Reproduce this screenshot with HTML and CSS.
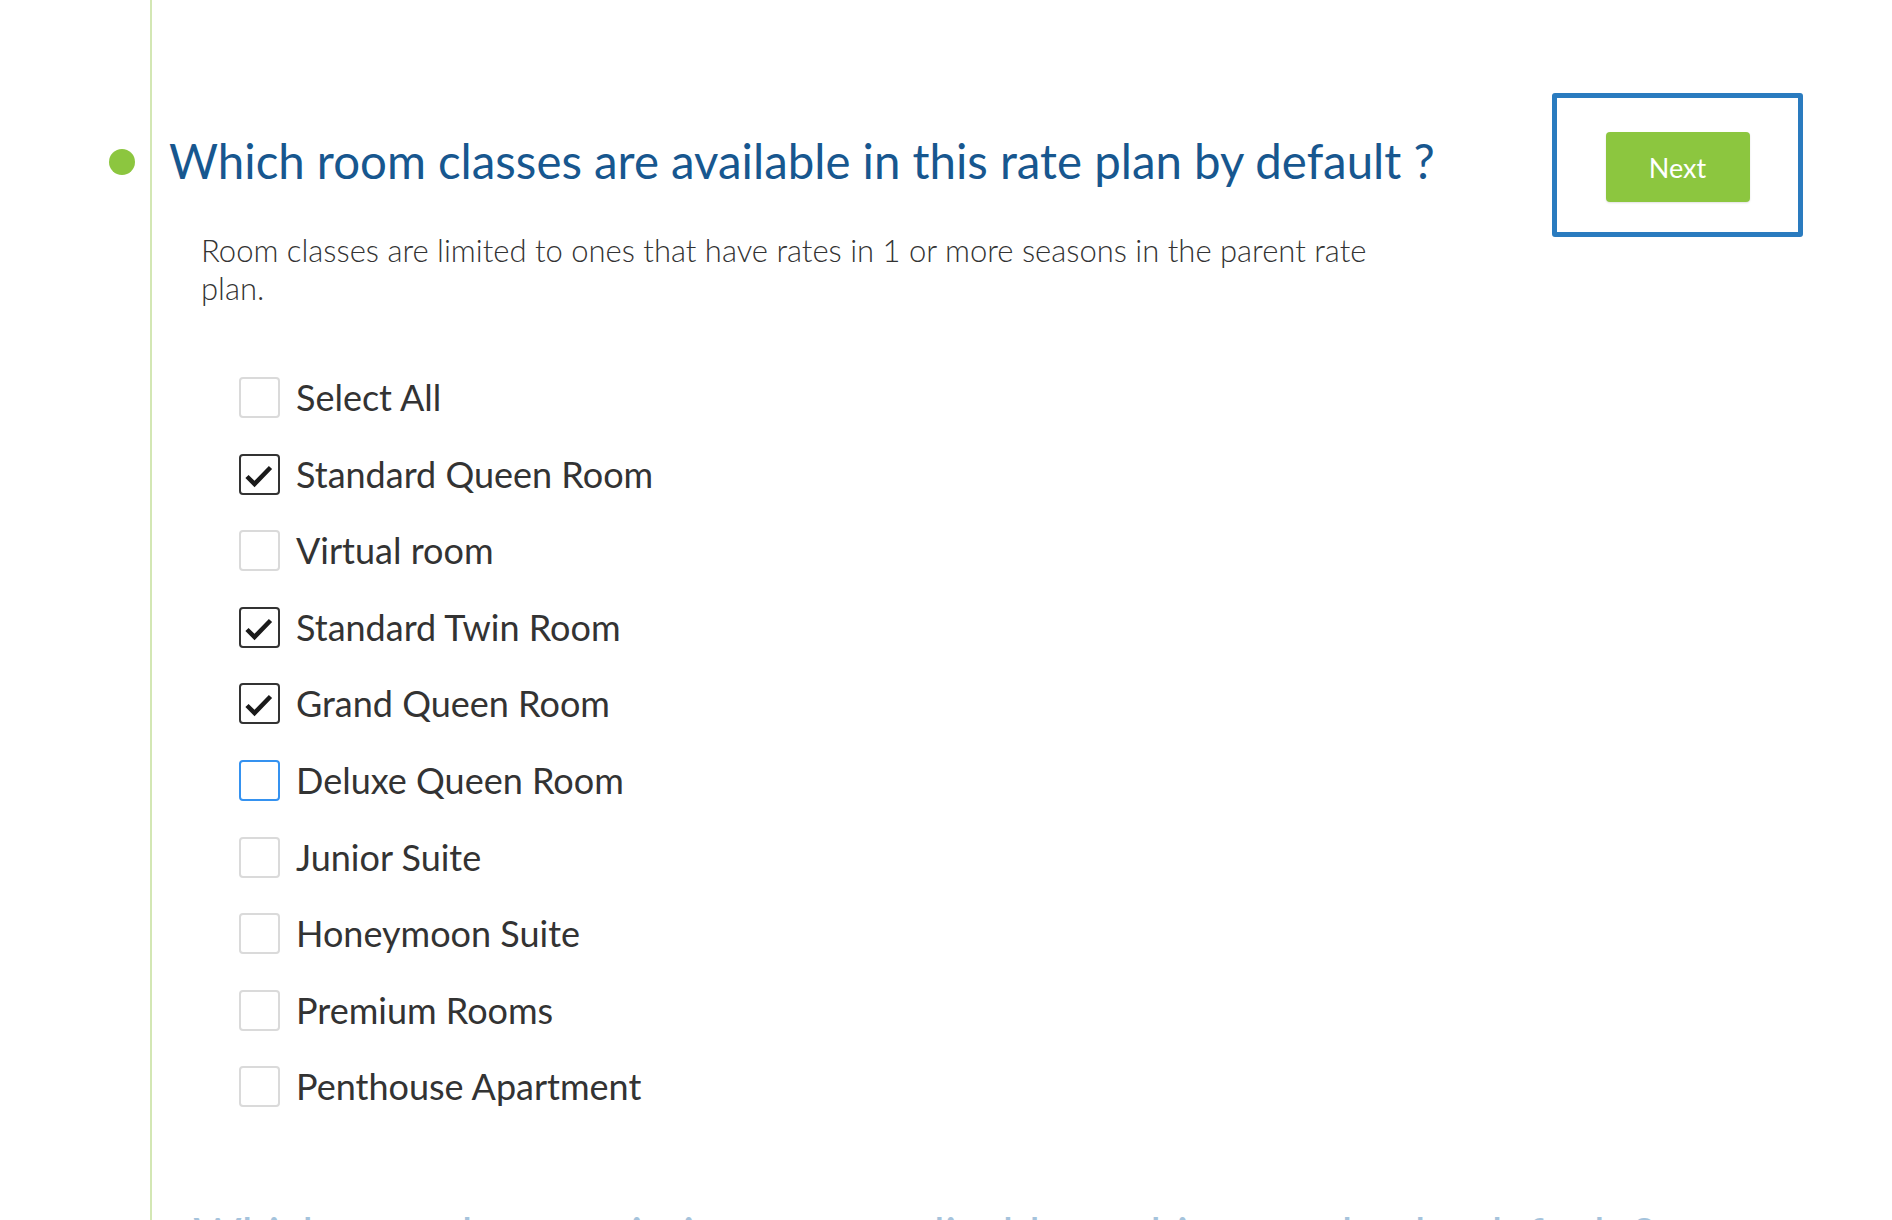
FILE: index.html
```html
<!DOCTYPE html>
<html lang="en">
<head>
<meta charset="utf-8">
<title>Rate plan room classes</title>
<link rel="stylesheet" href="styles.css">
</head>
<body>
<div class="timeline">
  <section class="step active">
    <span class="step-dot"></span>
    <div class="step-header">
      <div class="step-main">
        <h2 class="step-title">Which room classes are available in this rate plan by default ?</h2>
        <p class="step-desc">Room classes are limited to ones that have rates in 1 or more seasons in the parent rate plan.</p>
      </div>
      <div class="next-box">
        <button class="btn-next" type="button">Next</button>
      </div>
    </div>
    <ul class="check-list">
      <li class="check-item"><span class="box"></span><span class="label">Select All</span></li>
      <li class="check-item"><span class="box checked"><svg viewBox="0 0 41 41"><polyline points="8,22.5 15.5,30 31.5,13.5" /></svg></span><span class="label">Standard Queen Room</span></li>
      <li class="check-item"><span class="box"></span><span class="label">Virtual room</span></li>
      <li class="check-item"><span class="box checked"><svg viewBox="0 0 41 41"><polyline points="8,22.5 15.5,30 31.5,13.5" /></svg></span><span class="label">Standard Twin Room</span></li>
      <li class="check-item"><span class="box checked"><svg viewBox="0 0 41 41"><polyline points="8,22.5 15.5,30 31.5,13.5" /></svg></span><span class="label">Grand Queen Room</span></li>
      <li class="check-item"><span class="box focused"></span><span class="label">Deluxe Queen Room</span></li>
      <li class="check-item"><span class="box"></span><span class="label">Junior Suite</span></li>
      <li class="check-item"><span class="box"></span><span class="label">Honeymoon Suite</span></li>
      <li class="check-item"><span class="box"></span><span class="label">Premium Rooms</span></li>
      <li class="check-item"><span class="box"></span><span class="label">Penthouse Apartment</span></li>
    </ul>
  </section>
  <section class="step upcoming">
    <h2 class="step-title faded">Which rate plan restrictions are applicable to this rate plan by default ?</h2>
  </section>
</div>
</body>
</html>
```
FILE: styles.css
```css
html, body {
  margin: 0;
  padding: 0;
  background: #ffffff;
  height: 1220px;
  overflow: hidden;
}
body {
  font-family: Lato, "Open Sans", "Liberation Sans", sans-serif;
  color: #333333;
}
.timeline {
  margin-left: 150px;
  border-left: 2px solid #d3e7b4;
  min-height: 1260px;
  padding-top: 93px;
  box-sizing: border-box;
}
.step {
  position: relative;
}
.step-dot {
  position: absolute;
  left: -43px;
  top: 56px;
  width: 26px;
  height: 26px;
  border-radius: 50%;
  background: #8cc63f;
}
.step-header {
  display: flex;
  align-items: flex-start;
}
.step-main {
  padding-left: 17px;
  width: 1280px;
  padding-bottom: 70px;
}
.step-title {
  margin: 0;
  padding-top: 39px;
  font-size: 47.4px;
  font-weight: 400;
  line-height: 57px;
  color: #17578f;
  white-space: nowrap;
}
.step-desc {
  margin: 42px 0 0 32px;
  font-size: 31px;
  font-weight: 300;
  line-height: 38px;
  color: #333333;
  width: 1200px;
}
.next-box {
  margin-left: auto;
  margin-right: 89px;
  width: 241px;
  height: 100px;
  border: 5px solid #2a7bbf;
  border-radius: 3px;
  display: flex;
  justify-content: center;
  align-items: flex-start;
  padding-top: 34px;
  box-sizing: content-box;
}
.btn-next {
  width: 144px;
  height: 70px;
  border: none;
  border-radius: 4px;
  background: #8cc63f;
  color: #ffffff;
  font-family: Lato, "Open Sans", sans-serif;
  font-size: 27px;
  font-weight: 400;
  box-shadow: 0 1px 2px rgba(0,0,0,0.12);
  cursor: pointer;
}
.check-list {
  list-style: none;
  margin: 0;
  padding: 0 0 0 87px;
  display: flex;
  flex-direction: column;
  gap: 35.6px;
}
.check-item {
  display: flex;
  align-items: center;
  gap: 16px;
  height: 41px;
}
.box {
  width: 41px;
  height: 41px;
  box-sizing: border-box;
  border: 2px solid #dadada;
  border-radius: 4px;
  background: #ffffff;
  flex: none;
  display: flex;
}
.box polyline {
  fill: none;
  stroke: #1a1a1a;
  stroke-width: 4.5;
  stroke-linecap: butt;
  stroke-linejoin: miter;
}
.box.checked {
  border-color: #333333;
}
.box.checked svg {
  margin: -2px;
  width: 41px;
  height: 41px;
  flex: none;
}
.box.focused {
  border-color: #3592f0;
}
.label {
  font-size: 36px;
  line-height: 41px;
  color: #333333;
}
.upcoming {
  padding-top: 99px;
}
.step-title.faded {
  padding-top: 0;
  padding-left: 41px;
  color: #6a9cc6;
  opacity: 0.6;
}
```
